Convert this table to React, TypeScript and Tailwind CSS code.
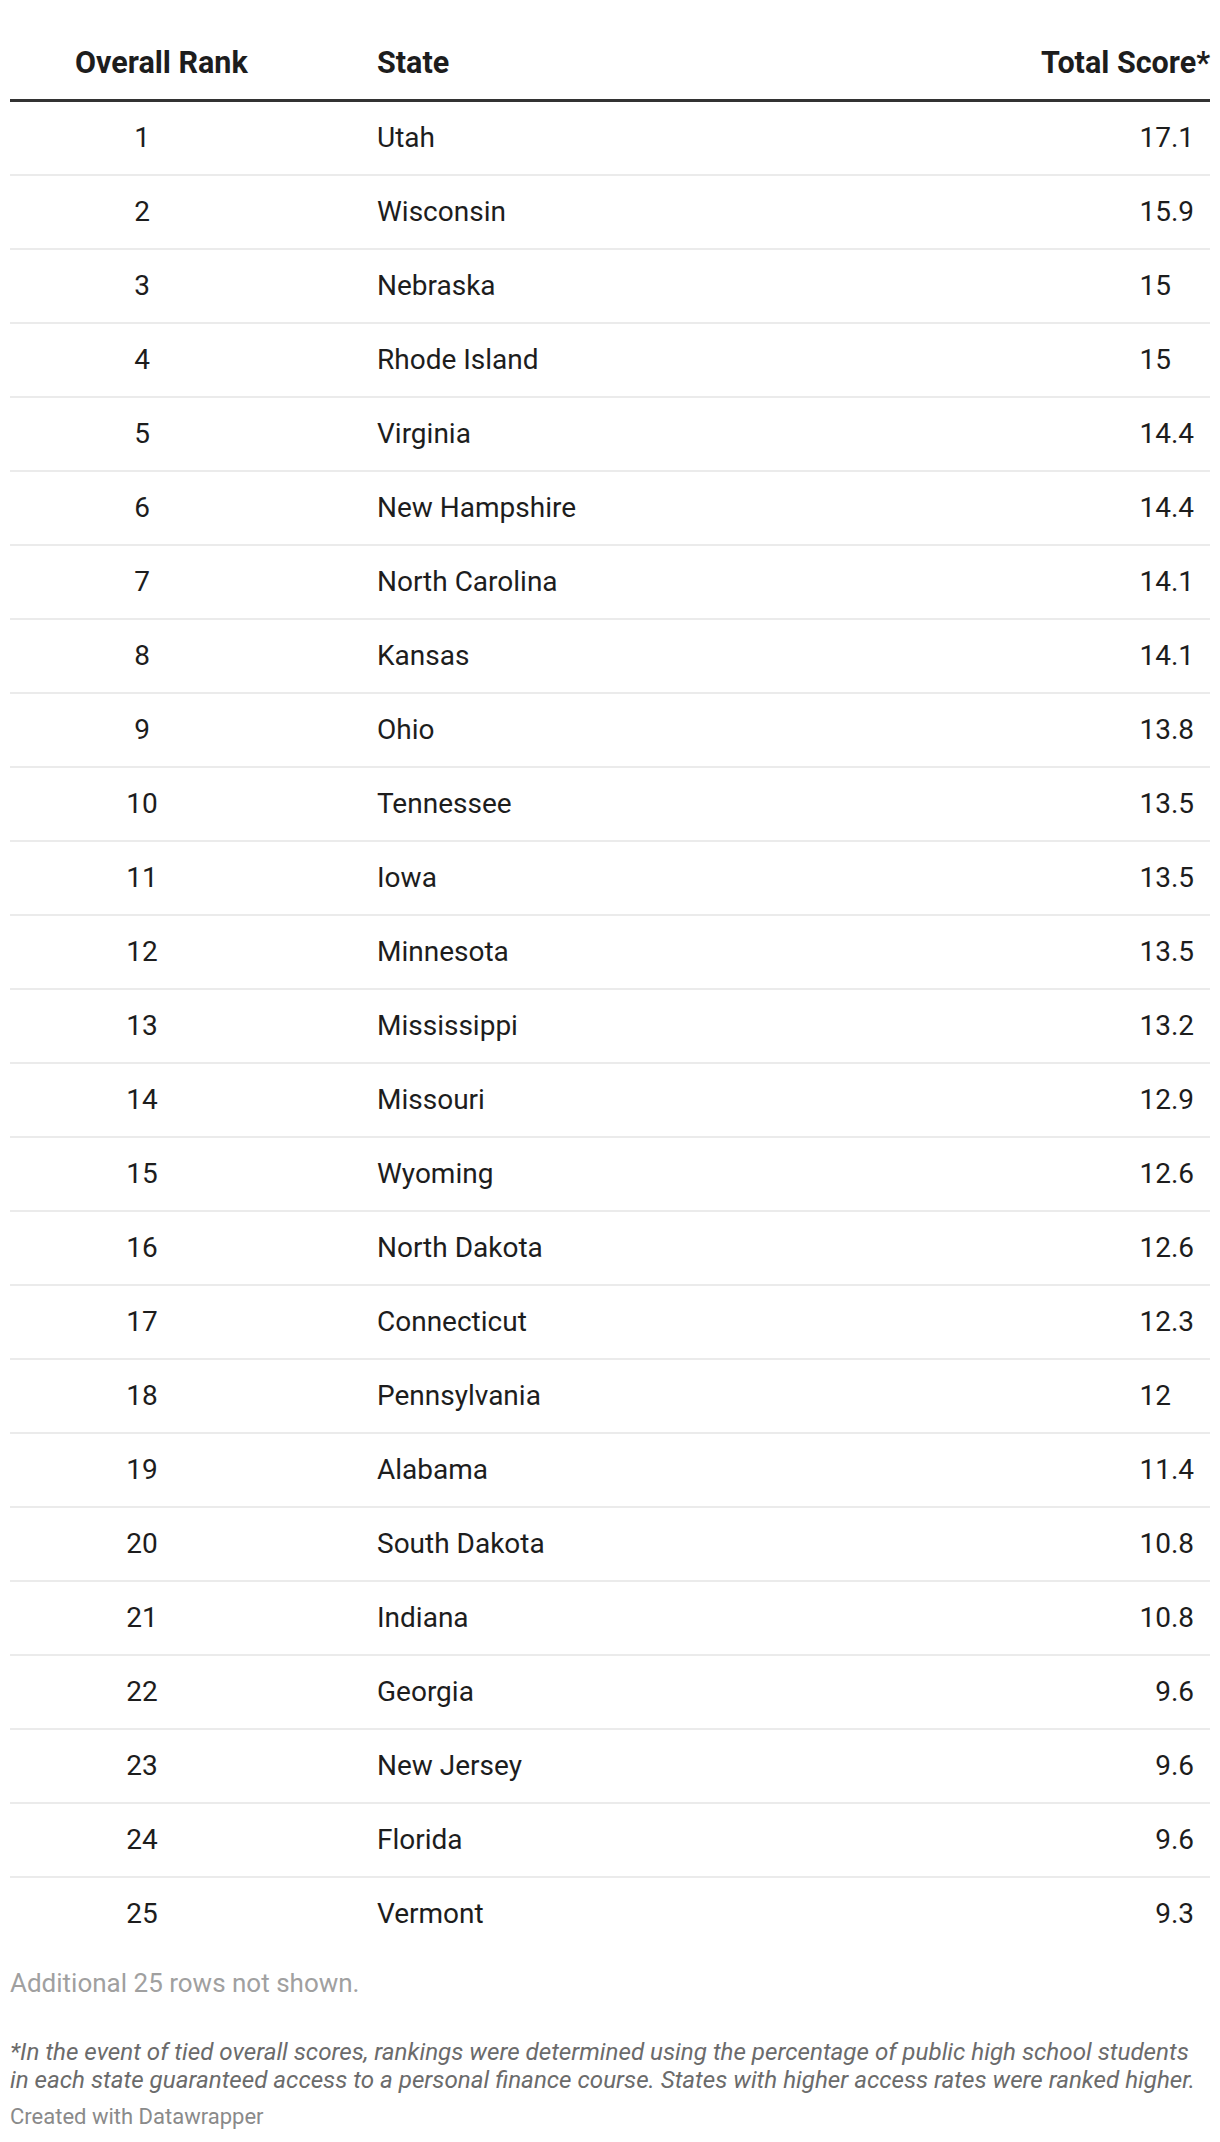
const rows: [number, string, string][] = [
  [1, "Utah", "17.1"],
  [2, "Wisconsin", "15.9"],
  [3, "Nebraska", "15"],
  [4, "Rhode Island", "15"],
  [5, "Virginia", "14.4"],
  [6, "New Hampshire", "14.4"],
  [7, "North Carolina", "14.1"],
  [8, "Kansas", "14.1"],
  [9, "Ohio", "13.8"],
  [10, "Tennessee", "13.5"],
  [11, "Iowa", "13.5"],
  [12, "Minnesota", "13.5"],
  [13, "Mississippi", "13.2"],
  [14, "Missouri", "12.9"],
  [15, "Wyoming", "12.6"],
  [16, "North Dakota", "12.6"],
  [17, "Connecticut", "12.3"],
  [18, "Pennsylvania", "12"],
  [19, "Alabama", "11.4"],
  [20, "South Dakota", "10.8"],
  [21, "Indiana", "10.8"],
  [22, "Georgia", "9.6"],
  [23, "New Jersey", "9.6"],
  [24, "Florida", "9.6"],
  [25, "Vermont", "9.3"],
];

export default function App() {
  return (
    <div className="w-[1220px] bg-white px-[10px] pt-[47px] pb-[10px] font-[family-name:Roboto,sans-serif] text-[#1d1d1d]">
      <div className="grid grid-cols-[264px_1fr_300px] border-b-[3px] border-[#333333] pb-[20px] text-[30.5px] font-bold leading-[32px]">
        <div className="pl-[65px] text-left">Overall Rank</div>
        <div className="pl-[103px]">State</div>
        <div className="text-right">Total Score*</div>
      </div>
      <div>
        {rows.map(([rank, state, score], i) => {
          const isInt = !score.includes(".");
          return (
            <div
              key={rank}
              className={
                i < rows.length - 1
                  ? "grid h-[74px] grid-cols-[264px_1fr_300px] items-center border-b-2 border-[#ebebeb] text-[28px] leading-[32px]"
                  : "grid h-[72px] grid-cols-[264px_1fr_300px] items-center text-[28px] leading-[32px]"
              }
            >
              <div className="text-center">{rank}</div>
              <div className="pl-[103px]">{state}</div>
              <div className="pr-[16px] text-right">
                {score}
                {isInt && <span className="invisible">.0</span>}
              </div>
            </div>
          );
        })}
      </div>
      <div className="mt-[18px] text-[26px] leading-[30px] text-[#a0a0a0]">
        Additional 25 rows not shown.
      </div>
      <div className="mt-[40px] text-[24.2px] italic leading-[28px] text-[#6b6b6b]">
        *In the event of tied overall scores, rankings were determined using the percentage of public high school students
        <br />
        in each state guaranteed access to a personal finance course. States with higher access rates were ranked higher.
      </div>
      <div className="mt-[11px] text-[22px] leading-[24px] text-[#8a8a8a]">
        Created with Datawrapper
      </div>
    </div>
  );
}
